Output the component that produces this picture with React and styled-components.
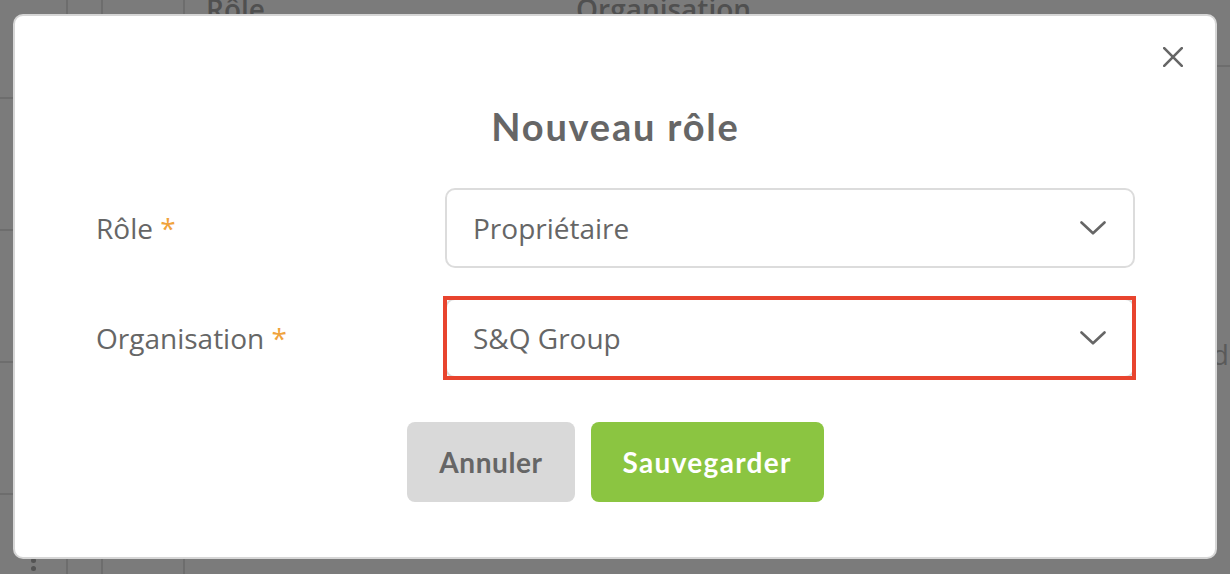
import React from "react";
import styled, { createGlobalStyle } from "styled-components";

const GlobalStyle = createGlobalStyle`
  * { box-sizing: border-box; }
  html, body { margin: 0; padding: 0; }
  body {
    background: #7b7b7b;
    font-family: "Open Sans", "Liberation Sans", sans-serif;
    overflow: hidden;
  }
`;

/* ---------- background page (dimmed table) ---------- */
const Page = styled.div`
  display: flex;
  height: 574px;
  width: 1230px;
  overflow: hidden;
  background: #7b7b7b;
`;

const SideCol = styled.div`
  width: 66px;
  flex: none;
  display: flex;
  flex-direction: column;
`;

const SideCell = styled.div`
  flex: none;
  height: ${(p) => p.$h}px;
  border-bottom: 2px solid #6d6d6d;
  display: flex;
  align-items: center;
  justify-content: center;
`;

const Kebab = styled.div`
  display: flex;
  flex-direction: column;
  gap: 3px;
  span {
    width: 5px;
    height: 5px;
    border-radius: 50%;
    background: #545454;
  }
`;

const Col = styled.div`
  flex: none;
  width: ${(p) => p.$w}px;
  border-left: 2px solid #6d6d6d;
`;

const MainCol = styled.div`
  flex: 1;
  border-left: 2px solid #6d6d6d;
  display: flex;
  flex-direction: column;
`;

const HeadRow = styled.div`
  height: 72px;
  flex: none;
  border-bottom: 2px solid #6d6d6d;
  display: flex;
  align-items: flex-start;
  padding-left: 21px;
  font-size: 28px;
  font-weight: 600;
  color: #505050;
  line-height: 1;
  margin-top: -5px;
`;

const HeadCell = styled.div`
  width: ${(p) => p.$w}px;
  flex: none;
`;

const BodyRow = styled.div`
  flex: 1;
  display: flex;
  justify-content: flex-end;
  padding-top: 268px;
  font-size: 28px;
  color: #5a5a5a;
  margin-right: 1px;
`;

/* ---------- modal ---------- */
const Modal = styled.div`
  position: fixed;
  left: 13px;
  top: 14px;
  width: 1204px;
  height: 545px;
  background: #fff;
  border: 2px solid #d6d6d6;
  border-radius: 10px;
  padding: 87px 80px 0 81px;
  display: flex;
  flex-direction: column;
`;

const CloseButton = styled.button`
  position: absolute;
  top: 31px;
  right: 32px;
  width: 20px;
  height: 20px;
  padding: 0;
  border: 0;
  background: none;
  cursor: pointer;
  display: flex;
`;

const Title = styled.h2`
  margin: 0;
  text-align: center;
  font-family: "Lato", "Liberation Sans", sans-serif;
  font-weight: 700;
  font-size: 38px;
  line-height: 46px;
  letter-spacing: 1.8px;
  color: #666;
`;

const Form = styled.div`
  margin-top: 39px;
  display: grid;
  grid-template-columns: 349px 1fr;
  row-gap: 30px;
  align-items: center;
`;

const Label = styled.label`
  font-size: 28px;
  color: #666;
  line-height: 38px;
`;

const Required = styled.span`
  color: #f0a33c;
`;

const Field = styled.div`
  position: relative;
  ${(p) =>
    p.$highlight &&
    `
    &::after {
      content: "";
      position: absolute;
      top: -2px;
      left: -2px;
      right: -1px;
      bottom: -2px;
      border: 4px solid #e8442e;
      pointer-events: none;
    }
  `}
`;

const Select = styled.div`
  height: 80px;
  border: 2px solid #dcdcdc;
  border-radius: 10px;
  background: #fff;
  padding: 0 27px 0 26px;
  display: flex;
  align-items: center;
  justify-content: space-between;
  font-size: 28px;
  color: #666;
`;

const Actions = styled.div`
  margin-top: 44px;
  display: flex;
  justify-content: center;
  gap: 16px;
`;

const Button = styled.button`
  height: 80px;
  padding: 0 32px;
  border: 0;
  border-radius: 8px;
  background: ${(p) => (p.$primary ? "#8bc541" : "#d9d9d9")};
  color: ${(p) => (p.$primary ? "#fff" : "#666")};
  font-family: "Lato", "Liberation Sans", sans-serif;
  font-weight: 700;
  font-size: 28px;
  letter-spacing: ${(p) => (p.$primary ? 1.3 : 0.6)}px;
  cursor: pointer;
`;

const Chevron = () => (
  <svg width="26" height="14" viewBox="0 0 26 14" fill="none">
    <polyline
      points="1.5,1.5 13,12.3 24.5,1.5"
      stroke="#666"
      strokeWidth="2.6"
      strokeLinecap="round"
      strokeLinejoin="round"
    />
  </svg>
);

const CloseIcon = () => (
  <svg width="20" height="20" viewBox="0 0 20 20" fill="none">
    <path d="M1.2 1.2 L18.8 18.8 M18.8 1.2 L1.2 18.8" stroke="#666" strokeWidth="2.6" strokeLinecap="round" />
  </svg>
);

export default function App() {
  return (
    <>
      <GlobalStyle />
      <Page>
        <SideCol>
          <SideCell $h={99} />
          <SideCell $h={132} />
          <SideCell $h={132} />
          <SideCell $h={132} />
          <SideCell $h={132}>
            <Kebab>
              <span />
              <span />
              <span />
            </Kebab>
          </SideCell>
        </SideCol>
        <Col $w={35} />
        <Col $w={82} />
        <MainCol>
          <HeadRow>
            <HeadCell $w={370}>Rôle</HeadCell>
            <HeadCell $w={300}>Organisation</HeadCell>
          </HeadRow>
          <BodyRow>d</BodyRow>
        </MainCol>
      </Page>

      <Modal role="dialog" aria-modal="true">
        <CloseButton aria-label="Fermer">
          <CloseIcon />
        </CloseButton>
        <Title>Nouveau rôle</Title>
        <Form>
          <Label>
            Rôle <Required>*</Required>
          </Label>
          <Field>
            <Select>
              <span>Propriétaire</span>
              <Chevron />
            </Select>
          </Field>
          <Label>
            Organisation <Required>*</Required>
          </Label>
          <Field $highlight>
            <Select>
              <span>S&amp;Q Group</span>
              <Chevron />
            </Select>
          </Field>
        </Form>
        <Actions>
          <Button>Annuler</Button>
          <Button $primary>Sauvegarder</Button>
        </Actions>
      </Modal>
    </>
  );
}
